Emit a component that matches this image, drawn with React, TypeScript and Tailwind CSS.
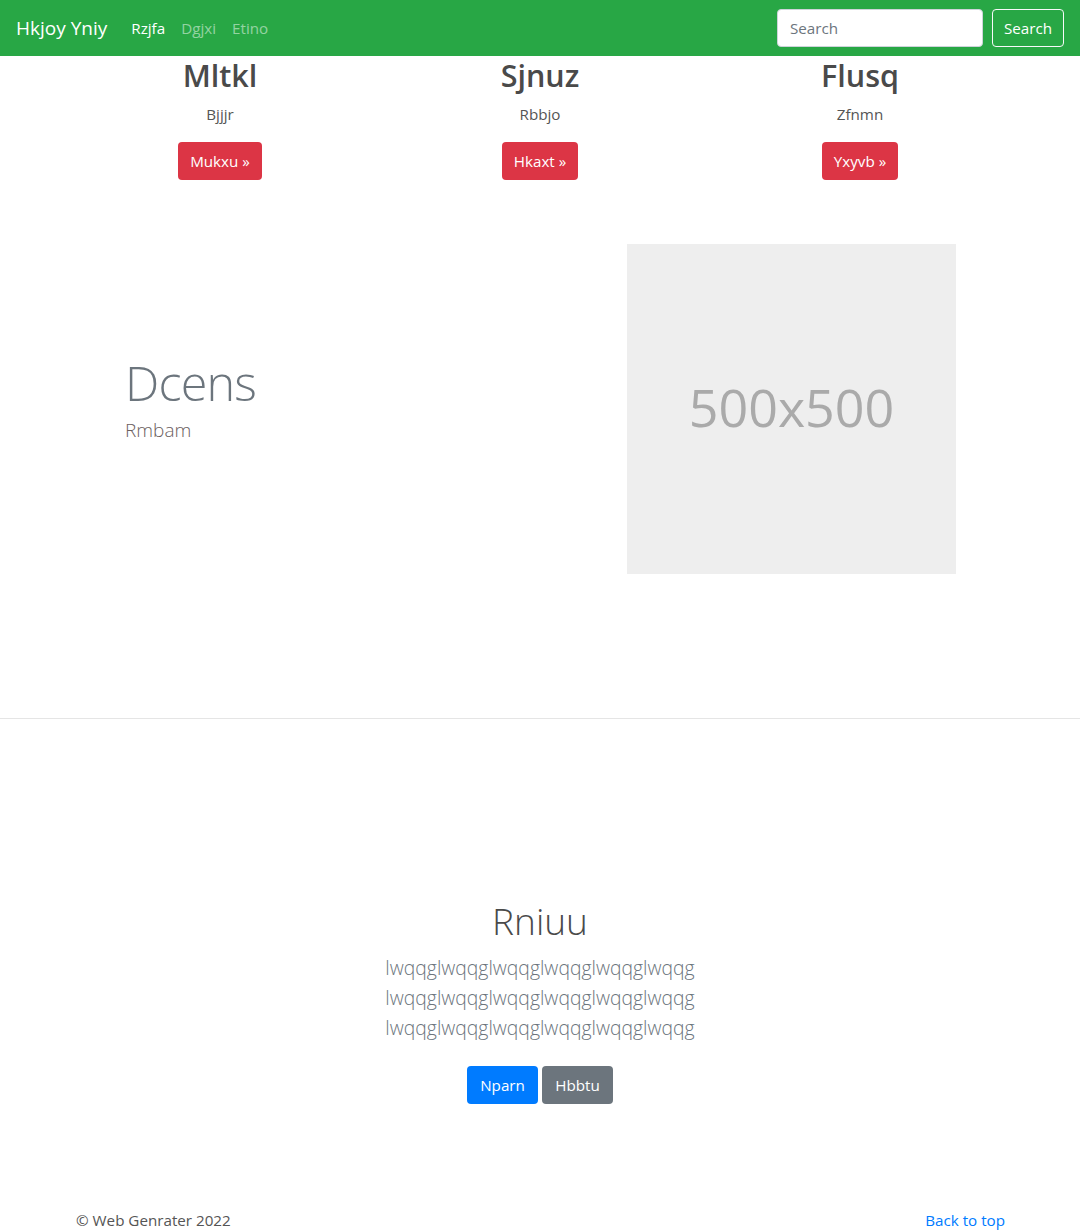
import React from 'react';

const features = [
  { title: 'Mltkl', text: 'Bjjjr', btn: 'Mukxu' },
  { title: 'Sjnuz', text: 'Rbbjo', btn: 'Hkaxt' },
  { title: 'Flusq', text: 'Zfnmn', btn: 'Yxyvb' },
];

const lines = [
  'lwqqglwqqglwqqglwqqglwqqglwqqg',
  'lwqqglwqqglwqqglwqqglwqqglwqqg',
  'lwqqglwqqglwqqglwqqglwqqglwqqg',
];

export default function App() {
  return (
    <div className="min-h-screen bg-white text-[#212529] font-['Open_Sans',sans-serif]">
      {/* Navbar */}
      <nav className="h-14 bg-[#28a745] flex items-center justify-between px-4">
        <div className="flex items-center">
          <a className="text-white text-[19px] mr-4 leading-[30px]">Hkjoy Yniy</a>
          <ul className="flex items-center text-[15.2px]">
            <li className="px-2 text-white">Rzjfa</li>
            <li className="px-2 text-white/50">Dgjxi</li>
            <li className="px-2 text-white/50">Etino</li>
          </ul>
        </div>
        <form className="flex items-center">
          <input
            placeholder="Search"
            className="w-[206px] h-[38px] rounded bg-white border border-[#ced4da] px-3 text-[15.2px] text-[#495057] placeholder:text-[#6c757d] mr-[9px] outline-none"
          />
          <button type="button" className="h-[38px] w-[72px] rounded border border-[#f8f9fa] text-white text-[15.2px]">
            Search
          </button>
        </form>
      </nav>

      {/* Three columns */}
      <div className="w-[960px] mx-auto grid grid-cols-3 text-center">
        {features.map((f) => (
          <div key={f.title} className="flex flex-col items-center">
            <h2 className="text-[30.5px] leading-[38px] font-semibold text-[#4a4a4a] mb-2">{f.title}</h2>
            <p className="text-[15.2px] leading-6 text-[#555] mb-4">{f.text}</p>
            <button type="button" className="h-[38px] px-3 rounded bg-[#dc3545] text-white text-[15.2px]">
              {f.btn} »
            </button>
          </div>
        ))}
      </div>

      {/* Featurette */}
      <div className="w-[960px] mx-auto flex items-center mt-16">
        <div className="flex-1 pl-[65px]">
          <h2 className="text-[48.5px] leading-[50px] font-light tracking-[-0.8px] text-[#6c757d] mb-2">Dcens</h2>
          <p className="text-[19px] leading-[30px] font-light text-[#6b5e5e] mb-4">Rmbam</p>
        </div>
        <div className="w-[329px] h-[330px] mr-[64px] bg-[#eeeeee] flex items-center justify-center">
          <span className="text-[52px] leading-none text-[#aaaaaa] -mt-1">500x500</span>
        </div>
      </div>

      <hr className="mt-[144px] border-0 border-t border-[#e5e5e5]" />

      {/* Jumbotron-ish section */}
      <section className="text-center pt-[178px]">
        <h1 className="text-[37px] leading-[48px] font-light text-[#4a4a4a] mb-2">Rniuu</h1>
        <div className="text-[19.4px] leading-[30px] font-light text-[#6c757d] mb-[23px]">
          {lines.map((l, i) => (
            <div key={i}>{l}</div>
          ))}
        </div>
        <div className="flex justify-center gap-1">
          <button type="button" className="h-[38px] w-[71px] rounded bg-[#007bff] text-white text-[15.2px]">Nparn</button>
          <button type="button" className="h-[38px] w-[71px] rounded bg-[#6c757d] text-white text-[15.2px]">Hbbtu</button>
        </div>
      </section>

      {/* Footer */}
      <footer className="w-[960px] mx-auto px-[15px] mt-[104px] flex justify-between text-[15.2px] leading-6">
        <p className="text-[#555] pl-px">© Web Genrater 2022</p>
        <a className="text-[#007bff]">Back to top</a>
      </footer>
    </div>
  );
}
